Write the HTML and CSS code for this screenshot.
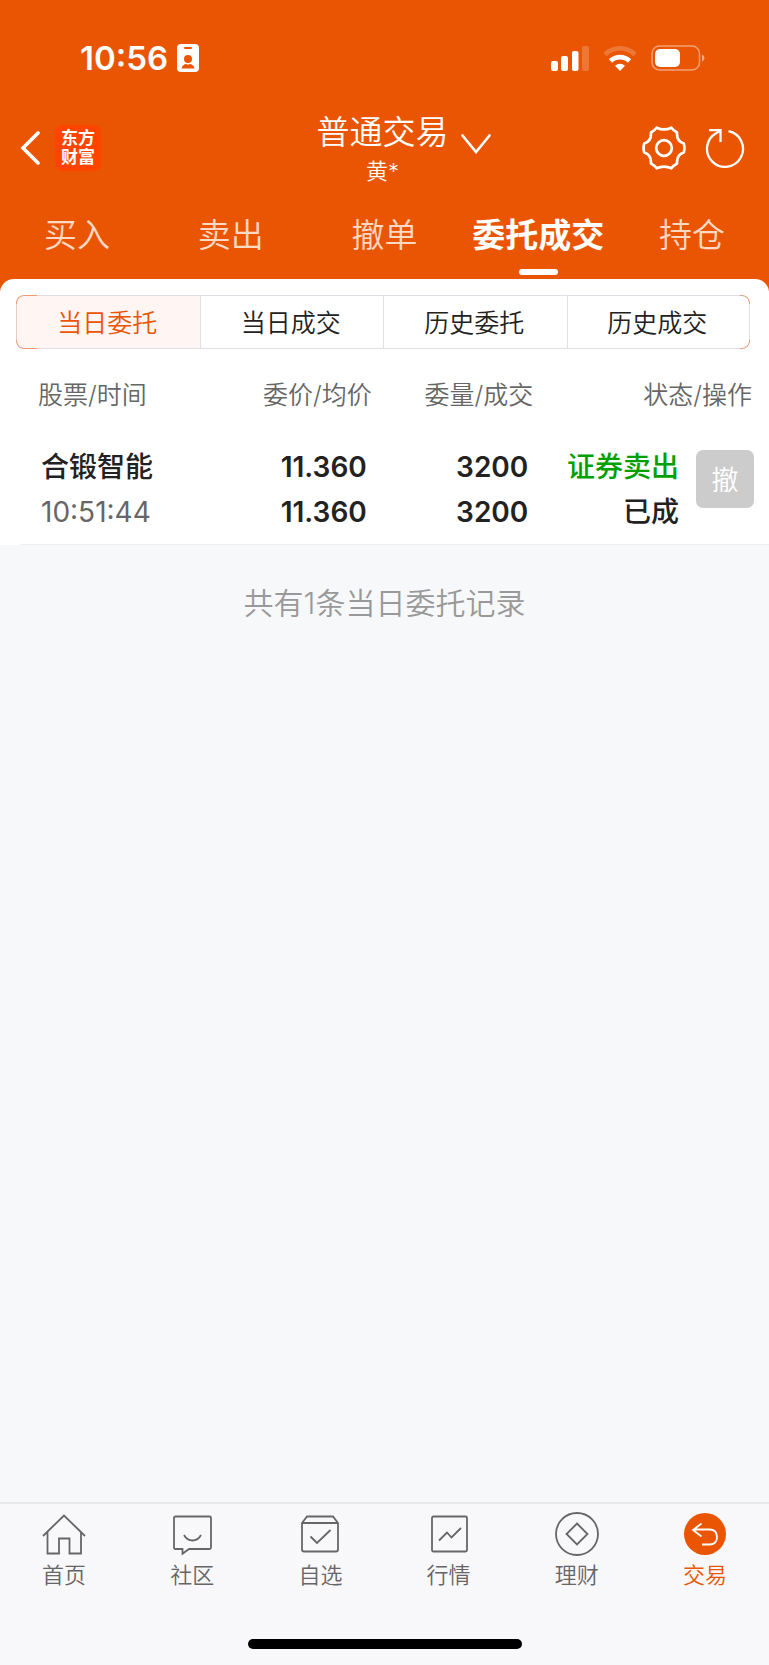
FILE: index.html
```html
<!DOCTYPE html>
<html lang="zh-CN">
<head>
  <meta charset="UTF-8" />
  <meta name="viewport" content="width=device-width, initial-scale=1" />
  <title>普通交易 - 委托成交</title>
  <link rel="stylesheet" href="styles.css">
</head>
<body>
  <header class="top">
    <!-- Status bar -->
    <div class="status-bar">
      <div class="status-left">
        <span class="clock">10:56</span>
        <svg class="id-badge" viewBox="0 0 22 28" width="22" height="28" aria-hidden="true">
          <rect width="22" height="28" rx="4" fill="#fff"/>
          <rect x="7" y="3" width="8" height="2" rx="1" fill="#ea5504"/>
          <ellipse cx="11" cy="15" rx="4" ry="4" fill="#ea5504"/>
          <path d="M4.500 24.500c.5-3 3-4.500 4.500-4.500q2 1 4 0c1.500 0 4 1.500 4.500 4.500z" fill="#ea5504"/>
        </svg>
      </div>
      <div class="status-right">
        <svg viewBox="0 0 38 25" width="38" height="25" aria-hidden="true">
          <g fill="#fff">
            <rect x="0" y="15" width="7" height="10" rx="2"/>
            <rect x="10" y="10" width="7" height="15" rx="2"/>
            <rect x="21" y="5" width="6.500" height="20" rx="2"/>
            <rect x="31" y="0" width="7" height="25" rx="2" opacity=".2"/>
          </g>
        </svg>
        <svg viewBox="0 0 34 25" width="34" height="25" aria-hidden="true">
          <g fill="none" stroke="#fff" stroke-width="4.600">
            <path d="M2 8.500a21.500 21.500 0 0 1 30 0" opacity=".2"/>
            <path d="M7.500 15a13.500 13.500 0 0 1 19 0"/>
          </g>
          <path d="M17 25l-5-5.200a7.400 7.400 0 0 1 10 0z" fill="#fff"/>
        </svg>
        <svg viewBox="0 0 54 26" width="54" height="26" aria-hidden="true">
          <rect x="1" y="1" width="47.500" height="24" rx="7.500" fill="none" stroke="#fff" stroke-opacity=".45" stroke-width="1.500"/>
          <rect x="4" y="4" width="25" height="18" rx="5" fill="#fff"/>
          <path d="M51 9.500q2.500 1 2.500 3.500t-2.500 3.500z" fill="#fff" opacity=".5"/>
        </svg>
      </div>
    </div>

    <!-- Title bar -->
    <div class="title-bar">
      <div class="title-left">
        <button class="icon-btn" type="button" aria-label="返回">
          <svg viewBox="0 0 20 34" width="20" height="34">
            <path d="M18 2L3 17l15 15" fill="none" stroke="#fff" stroke-width="3.600" stroke-linecap="round"/>
          </svg>
        </button>
        <a class="brand" href="#"><span>东方</span><span>财富</span></a>
      </div>
      <button class="account" type="button">
        <span class="account-name">
          <span class="account-type">普通交易</span>
          <span class="account-user">黄*</span>
        </span>
        <svg class="chevron" viewBox="0 0 30 20" width="30" height="20">
          <path d="M1.500 1.500L15 18 28.500 1.500" fill="none" stroke="#fff" stroke-width="2.600" stroke-linecap="round"/>
        </svg>
      </button>
      <div class="title-right">
        <button class="icon-btn" type="button" aria-label="设置">
          <svg viewBox="0 0 44 44" width="44" height="44">
            <path d="M9 6.500Q12.500 4.500 14.600 1.700Q22 5.200 29.400 1.700Q31.500 4.500 35 6.500Q34.500 15.500 41.800 17.500Q43 22 41.800 26.500Q34.500 28.500 35 37.500Q31.500 39.500 29.400 42.300Q22 38.800 14.600 42.300Q12.500 39.500 9 37.500Q9.500 28.500 2.200 26.500Q1 22 2.200 17.500Q9.500 15.500 9 6.500Z" fill="none" stroke="#fff" stroke-width="2.700" stroke-linejoin="round"/>
            <circle cx="22" cy="22" r="7.800" fill="none" stroke="#fff" stroke-width="2.700"/>
          </svg>
        </button>
        <button class="icon-btn" type="button" aria-label="刷新">
          <svg viewBox="0 0 40 40" width="40" height="40">
            <path d="M23.500 3.200A18 18 0 1 1 11.500 5L15.500 2.200M4 2.200H15.500V14" fill="none" stroke="#fff" stroke-width="2.300"/>
          </svg>
        </button>
      </div>
    </div>

    <!-- Main tabs -->
    <nav class="tabs">
      <a href="#">买入</a>
      <a href="#">卖出</a>
      <a href="#">撤单</a>
      <a href="#" class="active">委托成交</a>
      <a href="#">持仓</a>
    </nav>
  </header>

  <main class="content">
    <section class="panel">
      <div class="segments">
        <button type="button" class="active">当日委托</button>
        <button type="button">当日成交</button>
        <button type="button">历史委托</button>
        <button type="button">历史成交</button>
      </div>

      <table class="orders">
        <thead>
          <tr>
            <th class="col-name">股票/时间</th>
            <th class="col-price">委价/均价</th>
            <th class="col-qty">委量/成交</th>
            <th class="col-state">状态/操作</th>
          </tr>
        </thead>
        <tbody>
          <tr>
            <td>
              <span class="line label">合锻智能</span>
              <span class="line time">10:51:44</span>
            </td>
            <td>
              <span class="line">11.360</span>
              <span class="line">11.360</span>
            </td>
            <td>
              <span class="line">3200</span>
              <span class="line">3200</span>
            </td>
            <td>
              <div class="state">
                <div>
                  <span class="line label sell">证券卖出</span>
                  <span class="line label">已成</span>
                </div>
                <button class="cancel" type="button" disabled>撤</button>
              </div>
            </td>
          </tr>
        </tbody>
      </table>
    </section>
    <p class="summary">共有1条当日委托记录</p>
  </main>

  <footer class="bottom">
    <nav class="dock">
      <a href="#">
        <svg viewBox="0 0 44 44" width="44" height="44">
          <path d="M1 24L22 3.500 43 24M5.500 20V41.500H17V26.500H27.500V41.500H39V20" />
        </svg>
        <span>首页</span>
      </a>
      <a href="#">
        <svg viewBox="0 0 44 44" width="44" height="44">
          <path d="M5.500 4.500H39.500Q41 4.500 41 6V35.500Q41 37 39.500 37H19L12.500 41.800V37H5.500Q4 37 4 35.500V6Q4 4.500 5.500 4.500ZM14 23Q17 28.500 22.500 28.500T31 23"/>
        </svg>
        <span>社区</span>
      </a>
      <a href="#">
        <svg viewBox="0 0 44 44" width="44" height="44">
          <path d="M4 11L9 4.500H35L40 11V37.500Q40 39.500 38 39.500H6Q4 39.500 4 37.500ZM4 11H40M12.500 24.500L19 31 32.500 18"/>
        </svg>
        <span>自选</span>
      </a>
      <a href="#">
        <svg viewBox="0 0 44 44" width="44" height="44">
          <rect x="5" y="4.500" width="35" height="35" rx="1.500"/>
          <path d="M12 28.500L20 20.500 24.500 25.500 34 16"/>
        </svg>
        <span>行情</span>
      </a>
      <a href="#">
        <svg viewBox="0 0 44 44" width="44" height="44">
          <circle cx="22" cy="22" r="21"/>
          <path d="M22 11.500L32.500 22 22 32.500 11.500 22Z"/>
        </svg>
        <span>理财</span>
      </a>
      <a href="#" class="active">
        <svg viewBox="0 0 44 44" width="44" height="44">
          <circle cx="22" cy="22" r="21"/>
          <path d="M18.500 11.500L10 18 18.500 24.500M10 17.500H27Q34 18 34 25T27 32.500H19"/>
        </svg>
        <span>交易</span>
      </a>
    </nav>
    <div class="home-indicator"></div>
  </footer>
</body>
</html>
```
FILE: styles.css
```css
:root {
  --orange: #ea5504;
  --text: #222;
  --muted: #666;
  --line: #dcdfe4;
  --page-bg: #f7f8fa;
}

* {
  box-sizing: border-box;
}

body {
  display: flex;
  flex-direction: column;
  min-height: 100vh;
  margin: 0;
  background: var(--page-bg);
  color: var(--text);
  font-family: Inter, "Noto Sans CJK SC", sans-serif;
  font-weight: 350;
}

a {
  color: inherit;
  text-decoration: none;
}

button {
  padding: 0;
  border: 0;
  background: none;
  color: inherit;
  font: inherit;
}

svg {
  display: block;
}

/* Orange header, runs on behind the rounded panel */
.top {
  padding-bottom: 12px;
  background: var(--orange);
  color: #fff;
}

.status-bar {
  display: flex;
  align-items: center;
  justify-content: space-between;
  height: 108px;
  padding: 8px 64px 0 80px;
}

.status-left,
.status-right {
  display: flex;
  align-items: center;
}

.status-left {
  gap: 9px;
}

.status-right {
  gap: 14px;
}

.clock {
  font-size: 33px;
  font-weight: 600;
}

.title-bar {
  display: grid;
  grid-template-columns: 1fr auto 1fr;
  align-items: center;
  height: 80px;
  padding: 0 24px 0 20px;
}

.title-left,
.title-right {
  display: flex;
  align-items: center;
}

.title-left {
  gap: 15px;
}

.title-right {
  justify-content: flex-end;
  gap: 19px;
}

.brand {
  display: flex;
  flex-direction: column;
  align-items: center;
  justify-content: center;
  width: 46px;
  height: 46px;
  border-radius: 8px;
  background: #ff4400;
  font-size: 17px;
  font-weight: 700;
  line-height: 19px;
}

.account {
  position: relative;
  padding-top: 2px;
}

.account-name {
  display: flex;
  flex-direction: column;
  align-items: center;
}

.account-type {
  font-size: 33px;
  line-height: 44px;
}

.account-user {
  font-size: 22px;
  line-height: 34px;
}

.chevron {
  position: absolute;
  top: 26px;
  left: calc(100% + 12px);
}

.tabs {
  display: grid;
  grid-template-columns: repeat(5, 1fr);
  padding-bottom: 4px;
  font-size: 33px;
  line-height: 87px;
  text-align: center;
}

.tabs a {
  padding-top: 4px;
  height: 87px;
  color: #ffd9c4;
  white-space: nowrap;
}

.tabs .active {
  position: relative;
  color: #fff;
  font-weight: 600;
}

.tabs .active::after {
  content: "";
  position: absolute;
  bottom: 0;
  left: 50%;
  width: 39px;
  height: 6px;
  margin-left: -19px;
  border-radius: 3px;
  background: #fff;
}

.content {
  flex: 1;
  margin-top: -12px;
}

.panel {
  padding-top: 16px;
  border-radius: 14px 14px 0 0;
  background: #fff;
}

.panel::after {
  content: "";
  display: block;
  height: 1px;
  margin-left: 20px;
  background: #eee;
}

.segments {
  position: relative;
  display: grid;
  grid-template-columns: repeat(4, 1fr);
  height: 54px;
  margin: 0 19px 0 16px;
  font-size: 25px;
}

.segments button {
  padding: 0 2px 2px 0;
  border: solid var(--line);
  border-width: 1px 0 1px 1px;
}

.segments button:first-child {
  border-left-color: #e8cfc5;
  border-radius: 8px 0 0 8px;
}

.segments button:last-child {
  border-right-width: 1px;
  border-radius: 0 8px 8px 0;
}

.segments .active {
  background: #fff5f2;
  color: var(--orange);
}

/* Orange corners over the grey outline */
.segments::before,
.segments::after {
  content: "";
  position: absolute;
  top: 0;
  bottom: 0;
  border: 1px solid #ee9a74;
  mask: linear-gradient(#000 9px, transparent 9px, transparent calc(100% - 9px), #000 calc(100% - 9px));
  pointer-events: none;
}

.segments::before {
  left: 0;
  width: 20px;
  border-right: 0;
  border-radius: 8px 0 0 8px;
}

.segments::after {
  right: 0;
  width: 9px;
  border-left: 0;
  border-radius: 0 8px 8px 0;
}

.orders {
  width: 100%;
  border-collapse: collapse;
  table-layout: fixed;
}

.orders th {
  height: 90px;
  padding: 0 5px 2px 0;
  color: var(--muted);
  font-size: 25px;
  font-weight: 350;
  text-align: right;
}

.orders .col-name {
  width: 27%;
  padding-left: 38px;
  text-align: left;
}

.orders .col-price {
  width: 22%;
}

.orders .col-qty {
  width: 21%;
}

.orders .col-state {
  padding-right: 17px;
}

.orders td {
  padding: 6px 10px 9px 0;
  font-size: 28px;
  font-weight: 600;
  text-align: right;
  vertical-align: top;
}

.orders td:first-child {
  padding-left: 41px;
  text-align: left;
}

.orders td:last-child {
  padding-right: 15px;
}

.line {
  display: block;
  line-height: 45px;
}

.label {
  font-weight: 500;
}

.time {
  color: var(--muted);
  font-weight: 400;
}

.sell {
  color: #00a000;
}

.state {
  display: flex;
  align-items: flex-start;
  justify-content: flex-end;
  gap: 17px;
}

.cancel {
  width: 58px;
  height: 58px;
  margin-top: 5px;
  padding-bottom: 2px;
  border-radius: 7px;
  background: #ccc;
  color: #fff;
  font-size: 27px;
  font-weight: 350;
}

.summary {
  margin: 0;
  color: #999;
  font-size: 30px;
  line-height: 117px;
  text-align: center;
}

.bottom {
  padding-bottom: 16px;
  border-top: 2px solid #e8e9eb;
  background: #f8f8fb;
}

.dock {
  display: grid;
  grid-template-columns: repeat(6, 1fr);
  padding-top: 8px;
  color: var(--muted);
  font-size: 22px;
  line-height: 38px;
}

.dock a {
  display: flex;
  flex-direction: column;
  align-items: center;
}

.dock svg {
  fill: none;
  stroke: var(--muted);
  stroke-width: 1.8;
}

.dock .active {
  color: var(--orange);
}

.dock .active circle {
  fill: var(--orange);
  stroke: none;
}

.dock .active path {
  stroke: #fff;
}

.home-indicator {
  width: 274px;
  height: 10px;
  margin: 45px auto 0;
  border-radius: 5px;
  background: #000;
}
```
